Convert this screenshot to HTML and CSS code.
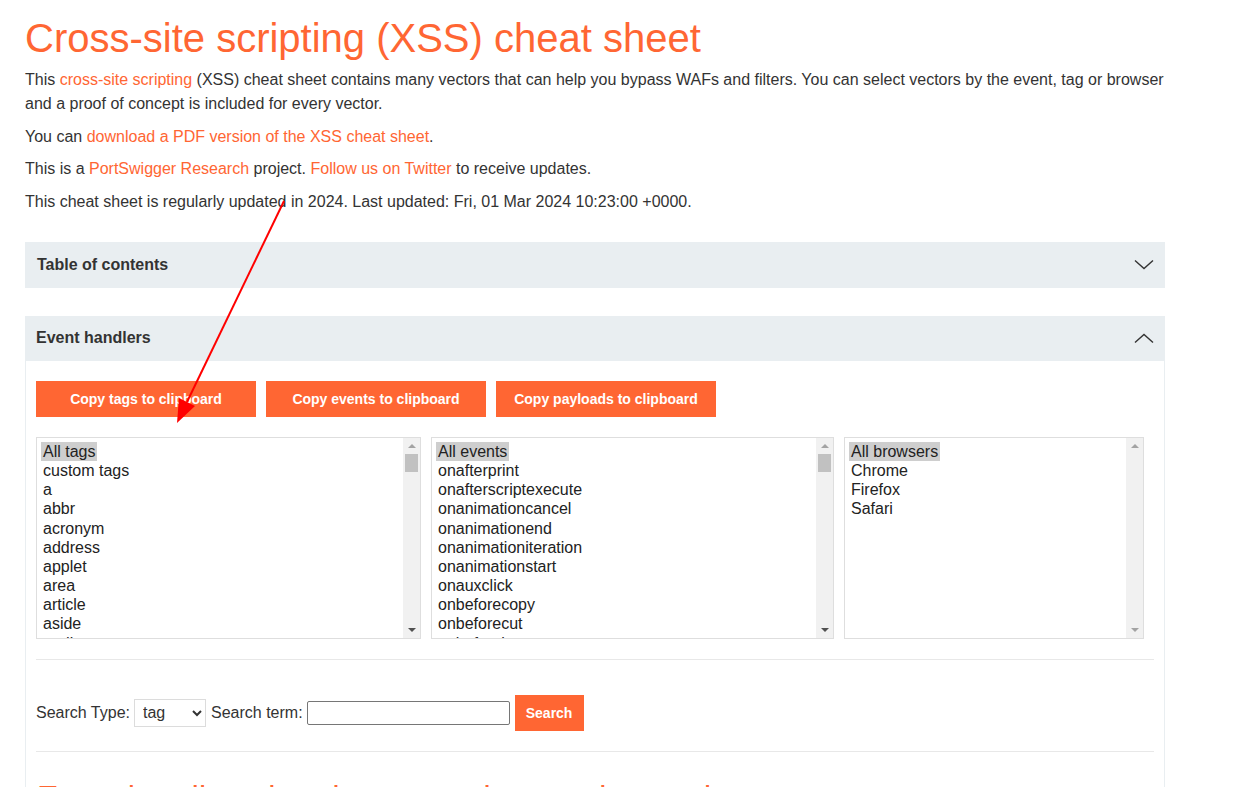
FILE: index.html
```html
<!DOCTYPE html>
<html lang="en">
<head>
<meta charset="utf-8">
<title>Cross-site scripting (XSS) cheat sheet</title>
<link rel="stylesheet" href="styles.css">
</head>
<body>
<div class="page">
  <h1 class="title">Cross-site scripting (XSS) cheat sheet</h1>
  <p>This <a href="#">cross-site scripting</a> (XSS) cheat sheet contains many vectors that can help you bypass WAFs and filters. You can select vectors by the event, tag or browser and a proof of concept is included for every vector.</p>
  <p>You can <a href="#">download a PDF version of the XSS cheat sheet</a>.</p>
  <p>This is a <a href="#">PortSwigger Research</a> project. <a href="#">Follow us on Twitter</a> to receive updates.</p>
  <p>This cheat sheet is regularly updated in 2024. Last updated: Fri, 01 Mar 2024 10:23:00 +0000.</p>

  <div class="panel toc">
    <div class="panel-head">
      <span>Table of contents</span>
      <svg class="chev" width="20" height="11" viewBox="0 0 20 11"><path d="M1 1.5 L10 9.5 L19 1.5" fill="none" stroke="#333" stroke-width="1.4"/></svg>
    </div>
  </div>

  <div class="panel events">
    <div class="panel-head">
      <span>Event handlers</span>
      <svg class="chev" width="20" height="11" viewBox="0 0 20 11"><path d="M1 9.5 L10 1.5 L19 9.5" fill="none" stroke="#333" stroke-width="1.4"/></svg>
    </div>
    <div class="panel-body">
      <div class="btn-row">
        <button class="btn">Copy tags to clipboard</button>
        <button class="btn">Copy events to clipboard</button>
        <button class="btn">Copy payloads to clipboard</button>
      </div>

      <div class="lists">
        <div class="listbox lb-tags">
          <div class="opts">
            <span class="opt sel">All tags</span>
            <span class="opt">custom tags</span>
            <span class="opt">a</span>
            <span class="opt">abbr</span>
            <span class="opt">acronym</span>
            <span class="opt">address</span>
            <span class="opt">applet</span>
            <span class="opt">area</span>
            <span class="opt">article</span>
            <span class="opt">aside</span>
            <span class="opt">audio</span>
            <span class="opt">b</span>
          </div>
          <div class="sb">
            <span class="arr up dim"></span>
            <span class="thumb"></span>
            <span class="arr down"></span>
          </div>
        </div>
        <div class="listbox lb-events">
          <div class="opts">
            <span class="opt sel">All events</span>
            <span class="opt">onafterprint</span>
            <span class="opt">onafterscriptexecute</span>
            <span class="opt">onanimationcancel</span>
            <span class="opt">onanimationend</span>
            <span class="opt">onanimationiteration</span>
            <span class="opt">onanimationstart</span>
            <span class="opt">onauxclick</span>
            <span class="opt">onbeforecopy</span>
            <span class="opt">onbeforecut</span>
            <span class="opt">onbeforeinput</span>
            <span class="opt">onbeforeprint</span>
          </div>
          <div class="sb">
            <span class="arr up dim"></span>
            <span class="thumb"></span>
            <span class="arr down"></span>
          </div>
        </div>
        <div class="listbox lb-browsers">
          <div class="opts">
            <span class="opt sel">All browsers</span>
            <span class="opt">Chrome</span>
            <span class="opt">Firefox</span>
            <span class="opt">Safari</span>
          </div>
          <div class="sb">
            <span class="arr up dim"></span>
            <span class="spacer"></span>
            <span class="arr down dim"></span>
          </div>
        </div>
      </div>

      <div class="rule"></div>

      <form class="search" onsubmit="return false">
        <label>Search Type:</label>
        <select class="stype"><option>tag</option><option>event</option></select>
        <label>Search term:</label>
        <input class="sterm" type="text">
        <button class="btn btn-search">Search</button>
      </form>

      <div class="rule rule-tight"></div>

      <h2 class="sub">Event handlers that do not require user interaction</h2>
    </div>
  </div>
</div>

<svg class="annot" width="1255" height="787" viewBox="0 0 1255 787">
  <line x1="284" y1="201" x2="187" y2="402" stroke="#ff0000" stroke-width="2"/>
  <polygon points="177,423 179,398 195,406" fill="#ff0000"/>
</svg>
</body>
</html>
```

FILE: styles.css
```css
html, body {
  margin: 0;
  padding: 0;
  background: #fff;
}
body {
  font-family: "Liberation Sans", Arial, sans-serif;
  font-size: 16px;
  color: #333;
  position: relative;
  overflow: hidden;
  height: 787px;
}
.page {
  width: 1140px;
  padding: 0 25px;
}
.title {
  font-size: 40px;
  font-weight: normal;
  color: #ff6633;
  line-height: 48px;
  margin: 14px 0 6px;
}
p {
  line-height: 24px;
  margin: 0 0 8.6px;
}
a {
  color: #ff6633;
  text-decoration: none;
}
.panel-head {
  display: flex;
  align-items: center;
  justify-content: space-between;
  background: #e9eef1;
  font-weight: bold;
  padding: 0 11px 0 12px;
}
.toc {
  margin-top: 28px;
}
.toc .panel-head {
  height: 46px;
}
.events {
  margin-top: 28px;
}
.events .panel-head {
  height: 45px;
  padding-left: 11px;
}
.chev {
  display: block;
}
.panel-body {
  border: 1px solid #e9eef1;
  border-top: none;
  padding: 20px 10px 0;
}
.btn-row {
  display: flex;
  gap: 10px;
}
.btn {
  background: #ff6633;
  color: #fff;
  border: none;
  font-family: "Liberation Sans", Arial, sans-serif;
  font-weight: bold;
  font-size: 14px;
  height: 36px;
  padding: 0;
  cursor: pointer;
}
.btn-row .btn {
  width: 220px;
}
.lists {
  display: flex;
  gap: 10px;
  margin-top: 20px;
}
.listbox {
  display: flex;
  height: 202px;
  box-sizing: border-box;
  border: 1px solid #dedede;
  background: #fff;
}
.lb-tags { width: 385px; }
.lb-events { width: 403px; }
.lb-browsers { width: 300px; }
.opts {
  flex: 1;
  overflow: hidden;
  padding: 4px 0 0 4px;
  display: flex;
  flex-direction: column;
  align-items: flex-start;
}
.opt {
  padding: 0 2px;
  height: 19.2px;
  line-height: 19px;
  color: #222;
  white-space: nowrap;
  flex-shrink: 0;
}
.opt.sel {
  background: #cecece;
}
.sb {
  width: 17px;
  background: #f1f1f1;
  display: flex;
  flex-direction: column;
  align-items: center;
}
.arr {
  width: 0;
  height: 0;
  border-left: 4px solid transparent;
  border-right: 4px solid transparent;
}
.arr.up {
  border-bottom: 4px solid #505050;
  margin: 6px 0 6px;
}
.arr.down {
  border-top: 4px solid #505050;
  margin: auto 0 6px;
}
.arr.dim.up { border-bottom-color: #a3a3a3; }
.arr.dim.down { border-top-color: #a3a3a3; }
.thumb {
  width: 13px;
  height: 18px;
  background: #c1c1c1;
}
.spacer { flex: 1; }
.rule {
  border-top: 1px solid #e8e8e8;
  margin-top: 20px;
}
.rule.rule-tight {
  margin-top: 0;
}
.search {
  display: flex;
  align-items: center;
  padding: 35px 0 20px;
  margin: 0;
}
.search label {
  margin-right: 4px;
}
.stype {
  width: 72px;
  height: 28px;
  font-family: "Liberation Sans", Arial, sans-serif;
  font-size: 16px;
  color: #333;
  border: 1px solid #dcdcdc;
  background: #fff;
  padding: 0 0 0 4px;
  margin-right: 5px;
  border-radius: 0;
}
.sterm {
  width: 203px;
  height: 24px;
  box-sizing: border-box;
  border: 1px solid #767676;
  border-radius: 2px;
  padding: 0 4px;
  font-size: 14px;
  margin-right: 5px;
}
.btn-search {
  width: 69px;
}
.sub {
  font-size: 32px;
  font-weight: normal;
  color: #ff6633;
  margin: 27px 0 0 1px;
  line-height: 37px;
  white-space: nowrap;
}
.annot {
  position: absolute;
  left: 0;
  top: 0;
  pointer-events: none;
}
```
